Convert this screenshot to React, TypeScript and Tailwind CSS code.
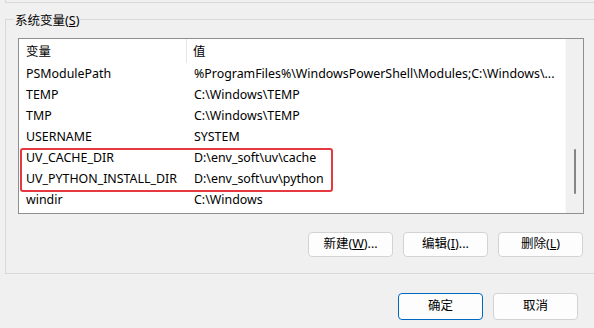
import React from "react";

const rows: [string, string][] = [
  ["PSModulePath", "%ProgramFiles%\\WindowsPowerShell\\Modules;C:\\Windows\\..."],
  ["TEMP", "C:\\Windows\\TEMP"],
  ["TMP", "C:\\Windows\\TEMP"],
  ["USERNAME", "SYSTEM"],
  ["UV_CACHE_DIR", "D:\\env_soft\\uv\\cache"],
  ["UV_PYTHON_INSTALL_DIR", "D:\\env_soft\\uv\\python"],
  ["windir", "C:\\Windows"],
];

function Btn({ children, primary }: { children: React.ReactNode; primary?: boolean }) {
  return (
    <div
      className={
        "w-[85px] flex items-center justify-center rounded-[4px] bg-[#fdfdfd] text-[12.5px] text-black " +
        (primary ? "h-[27px] border border-[#0067c0]" : "border border-[#d3d3d3]")
      }
    >
      {children}
    </div>
  );
}

export default function App() {
  return (
    <div
      className="w-[594px] h-[328px] bg-[#f0f0f0] overflow-hidden text-black"
      style={{ fontFamily: '"Noto Sans", "Noto Sans CJK SC", sans-serif' }}
    >
      <div className="ml-[5px] h-[3px] border-l border-b border-[#d9d9d9]" />
      <div className="relative mt-[16px] ml-[5px] w-[600px] border-l border-t border-b border-[#d9d9d9] pl-[12px] pt-[18px] pb-[16px]">
        <div className="absolute left-[8px] top-[-8px] bg-[#f0f0f0] px-[1px] text-[12.5px] leading-[18px]">
          系统变量(<span className="underline">S</span>)
        </div>
        <div className="w-[566px] h-[176px] border border-[#8f8f8f] bg-white flex">
          <div className="relative w-[546px] flex flex-col">
            <div className="h-[24px] flex items-center text-[12.4px]">
              <div className="w-[168px] pl-[7px] h-full flex items-center pt-[2px] border-r border-[#e5e5e5]">变量</div>
              <div className="pl-[6px] pt-[2px]">值</div>
            </div>
            {rows.map(([k, v]) => (
              <div key={k} className="h-[21px] flex items-center text-[12.4px] whitespace-nowrap pt-[1px]">
                <div className="w-[169px] pl-[7px]">{k}</div>
                <div className="pl-[6px]">{v}</div>
              </div>
            ))}
            <div className="absolute left-[1px] top-[109px] w-[313px] h-[44px] border-2 border-[#e5383f] rounded-[3px]" />
          </div>
          <div className="w-[18px] bg-[#f0f0f0] border-l border-[#fafafa] flex justify-center">
            <div className="mt-[110px] w-[2px] h-[45px] bg-[#858585] rounded-full" />
          </div>
        </div>
        <div className="w-[566px] mt-[18px] flex justify-end gap-[10px] pr-[1px]">
          <div className="h-[25px] flex gap-[10px]">
            <Btn>
              新建(<span className="underline">W</span>)...
            </Btn>
            <Btn>
              编辑(<span className="underline">I</span>)...
            </Btn>
            <Btn>
              删除(<span className="underline">L</span>)
            </Btn>
          </div>
        </div>
      </div>
      <div className="mt-[19px] w-[578px] flex justify-end gap-[10px]">
        <Btn primary>确定</Btn>
        <div className="h-[27px] flex">
          <Btn>取消</Btn>
        </div>
      </div>
    </div>
  );
}
